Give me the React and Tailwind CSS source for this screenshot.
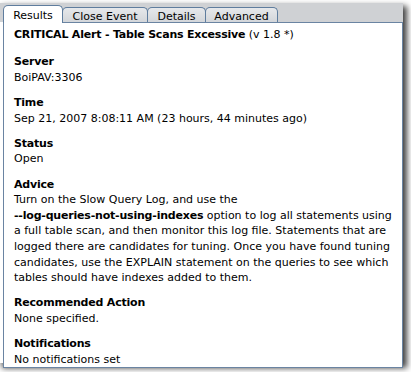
import React from 'react';

const TABS = [
  { label: 'Results', w: 'w-[60px]', active: true },
  { label: 'Close Event', w: 'w-[86px]' },
  { label: 'Details', w: 'w-[59px]' },
  { label: 'Advanced', w: 'w-[73px]' },
];

function Field({ label, children }) {
  return (
    <div>
      <div className="font-bold tracking-[-0.2px]">{label}</div>
      <div>{children}</div>
    </div>
  );
}

export default function App() {
  return (
    <div className="w-[411px] h-[372px] bg-white overflow-hidden text-[11px] leading-[15.6px] text-black font-['DejaVu_Sans',sans-serif]">
      <div className="mt-[3px] w-[403px] h-[360px] flex flex-col bg-white shadow-[3px_4px_6px_1px_rgba(0,0,0,0.75)]">
        {/* tab strip */}
        <div className="h-[19px] shrink-0 bg-[#cfd1d4] flex items-end pl-[3px] leading-[15px]">
          {TABS.map((t) =>
            t.active ? (
              <div
                key={t.label}
                className={`${t.w} h-[18px] -mb-px pt-[2px] relative z-10 bg-white border border-b-0 border-[#5f7d9e] rounded-t-[5px] text-center`}
              >
                {t.label}
              </div>
            ) : (
              <div
                key={t.label}
                className={`${t.w} h-[15px] -ml-px pt-[1px] bg-gradient-to-b from-[#e6e8eb] to-[#d3d6da] border border-b-0 border-[#5f7d9e] rounded-t-[5px] text-center`}
              >
                {t.label}
              </div>
            )
          )}
        </div>

        {/* results panel */}
        <div className="ml-[3px] flex-1 bg-white border border-[#6a84a2] px-[10px] pt-[4px] flex flex-col gap-[9.6px]">
          <div className="mb-[2px]">
            <span className="font-bold tracking-[-0.2px]">CRITICAL Alert - Table Scans Excessive</span> (v 1.8 *)
          </div>
          <Field label="Server">BoiPAV:3306</Field>
          <Field label="Time">Sep 21, 2007 8:08:11 AM (23 hours, 44 minutes ago)</Field>
          <Field label="Status">Open</Field>
          <div>
            <div className="font-bold tracking-[-0.2px]">Advice</div>
            <div className="whitespace-nowrap">Turn on the Slow Query Log, and use the</div>
            <div className="whitespace-nowrap">
              <span className="font-bold tracking-[-0.2px]">--log-queries-not-using-indexes</span> option to log all statements using
            </div>
            <div className="whitespace-nowrap">a full table scan, and then monitor this log file. Statements that are</div>
            <div className="whitespace-nowrap">logged there are candidates for tuning. Once you have found tuning</div>
            <div className="whitespace-nowrap">candidates, use the EXPLAIN statement on the queries to see which</div>
            <div className="whitespace-nowrap">tables should have indexes added to them.</div>
          </div>
          <Field label="Recommended Action">None specified.</Field>
          <Field label="Notifications">No notifications set</Field>
        </div>
      </div>
    </div>
  );
}
